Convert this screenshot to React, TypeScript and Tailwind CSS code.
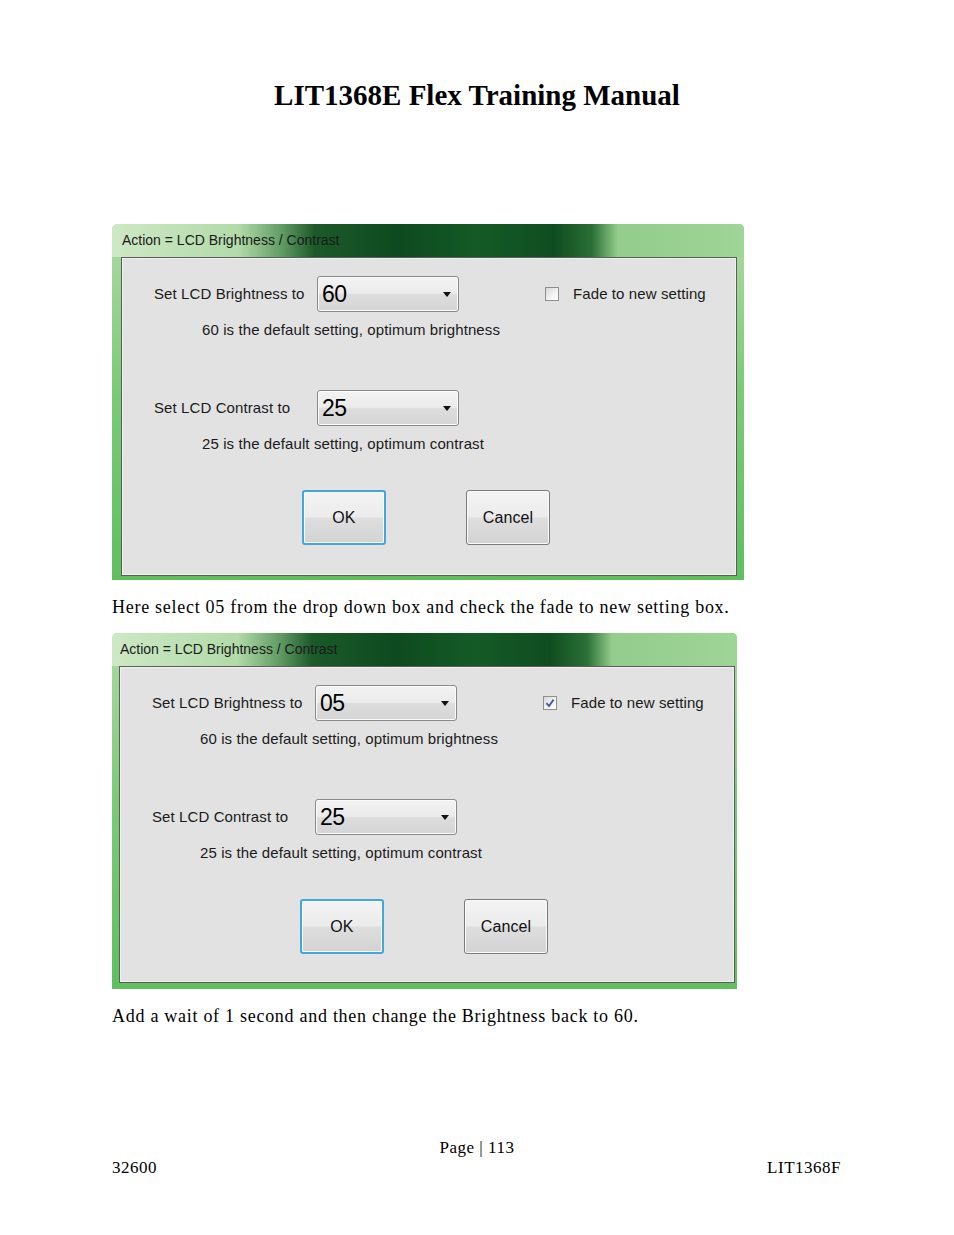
import React from 'react';

const serif = { fontFamily: '"Liberation Serif", "DejaVu Serif", serif' };
const ui = { fontFamily: '"Liberation Sans", Arial, sans-serif' };

function Dropdown({ value }: { value: string }) {
  return (
    <div className="w-[142px] h-[36px] flex items-center justify-between pl-[4px] pr-[7px] rounded-[3px] border border-[#8a8a8a] bg-[linear-gradient(180deg,#f3f3f3_0%,#ebebeb_48%,#dddddd_52%,#d5d5d5_100%)] shadow-[inset_0_0_0_1px_#fbfbfb]">
      <span className="text-[23px] leading-none text-black tracking-[-0.5px]">{value}</span>
      <svg width="8" height="5" viewBox="0 0 8 5">
        <path d="M0 0 H8 L4 5 Z" fill="#111" />
      </svg>
    </div>
  );
}

function Checkbox({ checked }: { checked: boolean }) {
  return (
    <div className="w-[14px] h-[14px] border border-[#8e8f8f] bg-[linear-gradient(135deg,#d8d8d8_0%,#f4f4f4_60%,#ffffff_100%)] flex items-center justify-center">
      {checked && (
        <svg width="10" height="10" viewBox="0 0 10 10">
          <path d="M1.5 5.2 L4 8 L8.6 1.6" stroke="#3d5a9c" strokeWidth="1.8" fill="none" />
        </svg>
      )}
    </div>
  );
}

function Button({ label, focused }: { label: string; focused?: boolean }) {
  return (
    <div
      className={
        'w-[84px] h-[55px] flex items-center justify-center rounded-[3px] text-[16px] text-[#111] bg-[linear-gradient(180deg,#f3f3f3_0%,#ececec_48%,#dedede_52%,#d3d3d3_100%)] shadow-[inset_0_0_0_1px_#fafafa] ' +
        (focused ? 'border-[2px] border-[#41a7dc]' : 'border border-[#7a7a7a]')
      }
    >
      {label}
    </div>
  );
}

interface DialogProps {
  brightness: string;
  fade: boolean;
  width: string;
  frame: string;
  titlePad: string;
}

function Dialog({ brightness, fade, width, frame, titlePad }: DialogProps) {
  return (
    <div className={'flex flex-col h-[356px] rounded-tl-[6px] rounded-tr-[5px] bg-[#6cc26a] ' + width} style={ui}>
      {/* Title bar */}
      <div className={'h-[33px] flex items-center rounded-t-[5px] bg-[linear-gradient(90deg,#cde8c5_0%,#b2dba9_20%,#5f9a62_27%,#1d5a2a_32%,#0d4a1f_45%,#145a26_58%,#0f4d20_70%,#2b7036_76%,#93cc8c_80%,#9fd597_100%)] ' + titlePad}>
        <span className="text-[14px] text-[#1a1a1a]">Action = LCD Brightness / Contrast</span>
      </div>
      {/* Frame + client */}
      <div className={'flex-1 flex bg-[linear-gradient(180deg,#a4d79b_0%,#7ccb77_40%,#5fbf5f_100%)] ' + frame}>
        <div className="flex-1 bg-[#e2e2e2] border border-[#5c5c5c] shadow-[inset_0_0_0_1px_#f0f0f0] pl-[32px] pt-[18px] text-[15px] text-[#1a1a1a] tracking-[0.1px]">
          <div className="flex items-center h-[36px]">
            <span className="w-[163px]">Set LCD Brightness to</span>
            <Dropdown value={brightness} />
            <div className="ml-[86px] flex items-center gap-[14px]">
              <Checkbox checked={fade} />
              <span>Fade to new setting</span>
            </div>
          </div>
          <div className="mt-[9px] pl-[48px] leading-[18px]">60 is the default setting, optimum brightness</div>
          <div className="flex items-center h-[36px] mt-[51px]">
            <span className="w-[163px]">Set LCD Contrast to</span>
            <Dropdown value="25" />
          </div>
          <div className="mt-[9px] pl-[48px] leading-[18px]">25 is the default setting, optimum contrast</div>
          <div className="flex mt-[37px] ml-[148px] gap-[80px]">
            <Button label="OK" focused />
            <Button label="Cancel" />
          </div>
        </div>
      </div>
    </div>
  );
}

export default function App() {
  return (
    <div className="w-[954px] min-h-[1235px] bg-white flex flex-col text-black" style={serif}>
      <h1 className="mt-[78px] text-center text-[29px] leading-[34px] font-bold">LIT1368E Flex Training Manual</h1>

      <div className="pl-[112px] mt-[112px]">
        <Dialog brightness="60" fade={false} width="w-[632px]" frame="pl-[9px] pr-[7px] pb-[4px]" titlePad="pl-[10px]" />
      </div>
      <p className="pl-[112px] mt-[15px] text-[18px] leading-[24px] tracking-[0.72px]">
        Here select 05 from the drop down box and check the fade to new setting box.
      </p>

      <div className="pl-[112px] mt-[14px]">
        <Dialog brightness="05" fade width="w-[625px]" frame="pl-[7px] pr-[2px] pb-[6px]" titlePad="pl-[8px]" />
      </div>
      <p className="pl-[112px] mt-[15px] text-[18px] leading-[24px] tracking-[0.72px]">
        Add a wait of 1 second and then change the Brightness back to 60.
      </p>

      <div className="mt-[110px] text-center text-[17px] leading-[20px] tracking-[0.5px]">Page | 113</div>
      <div className="flex justify-between pl-[112px] pr-[113px] text-[17px] leading-[20px] tracking-[0.5px]">
        <span>32600</span>
        <span>LIT1368F</span>
      </div>
    </div>
  );
}
